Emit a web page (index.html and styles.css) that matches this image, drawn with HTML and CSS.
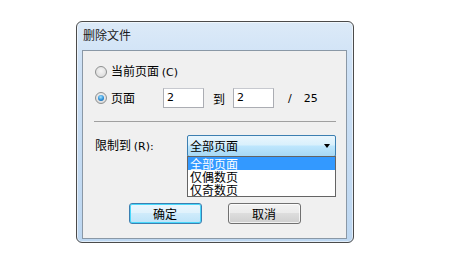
FILE: index.html
```html
<!DOCTYPE html>
<html>
<head>
<meta charset="utf-8">
<link rel="stylesheet" href="styles.css">
</head>
<body>
<div class="dialog">
  <div class="titlebar">删除文件</div>
  <div class="panel">
    <div class="row row-current">
      <span class="radio"></span>
      <span class="label">当前页面 <span class="latin">(C)</span></span>
    </div>
    <div class="row row-pages">
      <span class="radio checked"></span>
      <span class="label pages-label">页面</span>
      <span class="input">2</span>
      <span class="to">到</span>
      <span class="input">2</span>
      <span class="slash">/</span>
      <span class="total">25</span>
    </div>
    <div class="sep"></div>
    <div class="row row-limit">
      <span class="label limit-label">限制到 <span class="latin">(R):</span></span>
      <div class="combo-wrap">
        <div class="combo"><span class="combo-text">全部页面</span><span class="arrow"></span></div>
        <ul class="list">
          <li class="sel">全部页面</li>
          <li>仅偶数页</li>
          <li>仅奇数页</li>
        </ul>
      </div>
    </div>
    <div class="buttons">
      <button class="btn default">确定</button>
      <button class="btn">取消</button>
    </div>
  </div>
</div>
</body>
</html>
```
FILE: styles.css
```css
html, body {
  margin: 0;
  padding: 0;
  background: #ffffff;
}
body {
  width: 459px;
  height: 266px;
  overflow: hidden;
  font-family: "Noto Sans CJK SC", "DejaVu Sans", sans-serif;
  font-size: 12px;
  color: #000;
}
.dialog {
  margin: 21px 0 0 76px;
  width: 278px;
  height: 222px;
  box-sizing: border-box;
  border: 1px solid #4b4b4b;
  border-radius: 6px;
  background: linear-gradient(to bottom, #dceaf8 0px, #cfe2f6 40px, #c9def4 90px, #bdd7f1 100%);
  padding: 0 6px 3px 5px;
  display: flex;
  flex-direction: column;
  box-shadow: inset 0 0 0 1px rgba(255,255,255,0.55);
}
.titlebar {
  height: 28px;
  line-height: 26px;
  padding-left: 1px;
  font-size: 12px;
  color: #1a1a1a;
}
.panel {
  flex: 1;
  border: 1px solid #8a98a6;
  background: #f0f0f0;
  padding: 11px 10px 0 11px;
  display: flex;
  flex-direction: column;
}
.row {
  display: flex;
  align-items: center;
  height: 20px;
}
.row-pages {
  margin-top: 6px;
}
.radio {
  width: 12px;
  height: 12px;
  box-sizing: border-box;
  border-radius: 50%;
  border: 1px solid #8e9090;
  background: radial-gradient(circle at 50% 40%, #f6f6f6 0, #e2e2e2 60%, #cfcfcf 100%);
  margin-left: 1px;
  margin-right: 4px;
  flex: none;
  display: flex;
  align-items: center;
  justify-content: center;
}
.radio.checked::after {
  content: "";
  width: 6px;
  height: 6px;
  border-radius: 50%;
  background: radial-gradient(circle at 45% 35%, #a8e6ff 0, #2c8fd8 55%, #0d4f91 100%);
}
.label {
  white-space: nowrap;
  line-height: 16px;
}
.latin {
  font-family: "DejaVu Sans", sans-serif;
  font-size: 11px;
}
.pages-label {
  width: 52px;
}
.input {
  width: 41px;
  height: 20px;
  box-sizing: border-box;
  border: 1px solid #abadb3;
  border-top-color: #c7c9cf;
  background: #fff;
  font-family: "DejaVu Sans", sans-serif;
  font-size: 11px;
  line-height: 18px;
  padding-left: 3px;
}
.to {
  margin-left: 9px;
  margin-right: 8px;
}
.slash {
  margin-left: 14px;
  font-family: "DejaVu Sans", sans-serif;
  font-size: 11px;
}
.total {
  margin-left: 12px;
  font-family: "DejaVu Sans", sans-serif;
  font-size: 11px;
}
.sep {
  margin-top: 13px;
  height: 1px;
  background: #a0a0a0;
}
.row-limit {
  margin-top: 13px;
  height: 22px;
  padding-left: 1px;
}
.limit-label {
  width: 92px;
}
.combo-wrap {
  position: relative;
  width: 149px;
  height: 22px;
}
.combo {
  height: 22px;
  box-sizing: border-box;
  border: 1px solid #3c7fb1;
  border-radius: 2px;
  background: linear-gradient(to bottom, #eaf6fd 0, #d9f0fc 45%, #bee6fd 50%, #a7d9f5 100%);
  display: flex;
  align-items: center;
  padding-left: 2px;
  padding-right: 5px;
}
.combo-text {
  flex: 1;
  line-height: 16px;
}
.arrow {
  width: 0;
  height: 0;
  border-left: 3.5px solid transparent;
  border-right: 3.5px solid transparent;
  border-top: 4px solid #000;
}
.list {
  position: absolute;
  left: 0;
  top: 21px;
  width: 149px;
  box-sizing: border-box;
  margin: 0;
  padding: 0;
  list-style: none;
  background: #fff;
  border: 1px solid #646464;
  z-index: 2;
}
.list li {
  height: 13px;
  line-height: 13px;
  padding-left: 2px;
}
.list li.sel {
  background: #3399ff;
  color: #fff;
}
.buttons {
  margin-top: 46px;
  display: flex;
  justify-content: center;
  gap: 26px;
  padding-right: 1px;
}
.btn {
  width: 73px;
  height: 21px;
  box-sizing: border-box;
  border: 1px solid #707070;
  border-radius: 3px;
  background: linear-gradient(to bottom, #f2f2f2 0, #ebebeb 45%, #dddddd 50%, #cfcfcf 100%);
  font-family: "Noto Sans CJK SC", sans-serif;
  font-size: 12px;
  line-height: 17px;
  padding: 0;
  color: #000;
  box-shadow: inset 0 0 0 1px rgba(255,255,255,0.7);
}
.btn.default {
  border-color: #3c7fb1;
  background: linear-gradient(to bottom, #eaf6fd 0, #e0f2fc 45%, #cfebfb 50%, #bde3f8 100%);
  box-shadow: inset 0 0 0 1px #48d8fb;
}
```
